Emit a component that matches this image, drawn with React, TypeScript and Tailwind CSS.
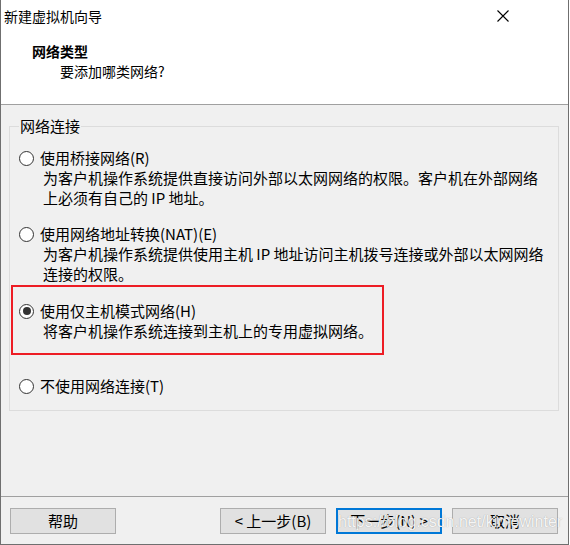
import React from "react";

const cjk = { fontFamily: '"Noto Sans CJK SC", "Noto Sans", sans-serif' };

function Radio({ checked }: { checked?: boolean }) {
  return (
    <span className="w-[15px] h-[15px] rounded-full border border-[#333333] bg-white flex items-center justify-center shrink-0">
      {checked && <span className="w-[8px] h-[8px] rounded-full bg-[#333333]" />}
    </span>
  );
}

function Option({
  label,
  lines,
  checked,
  className,
  children,
}: {
  label: string;
  lines?: string[];
  checked?: boolean;
  className?: string;
  children?: React.ReactNode;
}) {
  return (
    <div className={"relative " + (className || "")}>
      {children}
      <div className="flex items-center h-[20px] gap-[6px]">
        <Radio checked={checked} />
        <span>{label}</span>
      </div>
      {lines && (
        <div className="pl-[24px]">
          {lines.map((l, i) => (
            <div key={i} className="h-[20px] leading-[20px] whitespace-nowrap">
              {l}
            </div>
          ))}
        </div>
      )}
    </div>
  );
}

function Btn({ children, focused }: { children: React.ReactNode; focused?: boolean }) {
  return (
    <div
      className={
        "w-[106px] h-[26px] bg-[#e1e1e1] flex items-center justify-center text-[15px] leading-[20px] text-black " +
        (focused ? "border-2 border-[#0078d7]" : "border border-[#adadad]")
      }
    >
      {children}
    </div>
  );
}

export default function App() {
  return (
    <div className="relative w-[570px] h-[545px] bg-white overflow-hidden text-black" style={cjk}>
      <div className="w-[569px] h-[545px] border-l border-r border-b border-[#6f6f6f] flex flex-col bg-[#f0f0f0]">
        {/* Title bar */}
        <div className="h-[31px] bg-white flex items-center justify-between pl-[3px] pr-[59px]">
          <span className="text-[14px] leading-[20px]">新建虚拟机向导</span>
          <svg width="12" height="12" viewBox="0 0 12 12" className="mt-[1px]">
            <path d="M0.5 0.5 L11.5 11.5 M11.5 0.5 L0.5 11.5" stroke="#000" strokeWidth="1.1" fill="none" />
          </svg>
        </div>
        {/* Header */}
        <div className="h-[74px] bg-white border-b border-[#a0a0a0] pt-[10px]">
          <div className="pl-[31px] text-[14px] leading-[20px] font-bold">网络类型</div>
          <div className="pl-[59px] text-[14px] leading-[20px]">要添加哪类网络?</div>
        </div>
        {/* Body */}
        <div className="flex-1 pt-[11px] pl-[8px] pr-[9px]">
          <fieldset className="border border-[#dcdcdc] pl-[9px] pr-[9px] pt-[12px] pb-[14px] text-[15px] leading-[20px]">
            <legend className="px-[1px] leading-[20px] text-[15px]">网络连接</legend>
            <Option
              label="使用桥接网络(R)"
              lines={[
                "为客户机操作系统提供直接访问外部以太网网络的权限。客户机在外部网络",
                "上必须有自己的 IP 地址。",
              ]}
            />
            <Option
              className="mt-[16px]"
              label="使用网络地址转换(NAT)(E)"
              lines={[
                "为客户机操作系统提供使用主机 IP 地址访问主机拨号连接或外部以太网网络",
                "连接的权限。",
              ]}
            />
            <Option
              className="mt-[17px]"
              label="使用仅主机模式网络(H)"
              checked
              lines={["将客户机操作系统连接到主机上的专用虚拟网络。"]}
            >
              <span className="absolute left-[-8px] top-[-16px] w-[373px] h-[70px] border-2 border-[#ed1c24] pointer-events-none" />
            </Option>
            <Option className="mt-[35px]" label="不使用网络连接(T)" />
          </fieldset>
        </div>
        {/* Footer */}
        <div className="h-[48px] border-t border-[#a0a0a0] pt-[11px] pl-[9px] pr-[10px] flex items-start">
          <Btn>帮助</Btn>
          <div className="flex-1" />
          <div className="flex gap-[10px]">
            <Btn>&lt; 上一步(B)</Btn>
            <Btn focused>下一步(N) &gt;</Btn>
            <Btn>取消</Btn>
          </div>
        </div>
      </div>
      {/* Watermark */}
      <div
        className="absolute left-[338px] top-[512px] text-[16px] leading-[20px] text-white/90 whitespace-nowrap pointer-events-none"
        style={{ fontFamily: '"Liberation Sans", Arial, sans-serif', textShadow: "0 0 1px rgba(0,0,0,0.35)" }}
      >
        https://blog.csdn.net/kimowinter
      </div>
    </div>
  );
}
